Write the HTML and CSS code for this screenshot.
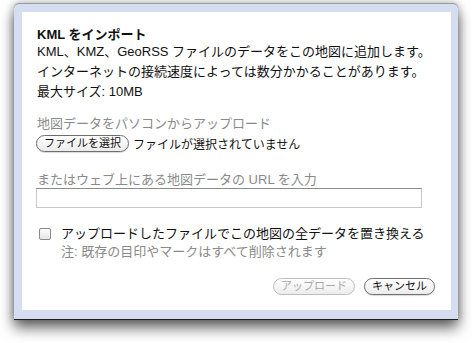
FILE: index.html
```html
<!DOCTYPE html>
<html lang="ja">
<head>
    <meta charset="UTF-8">
    <meta name="viewport" content="width=device-width, initial-scale=1.0">
    <title>KML をインポート</title>
    <link rel="stylesheet" href="styles.css">
</head>
<body>
    <div class="dialog">
        <div class="dialog-inner">
            <div class="title">KML をインポート</div>
            <div class="desc">
                KML、KMZ、GeoRSS ファイルのデータをこの地図に追加します。<br>
                インターネットの接続速度によっては数分かかることがあります。<br>
                最大サイズ: 10MB
            </div>

            <div class="label upload-label">地図データをパソコンからアップロード</div>
            <div class="file-row">
                <button class="pill">ファイルを選択</button>
                <span class="file-name">ファイルが選択されていません</span>
            </div>

            <div class="label url-label">またはウェブ上にある地図データの URL を入力</div>
            <input class="url-input" type="text">

            <label class="replace-row">
                <input class="check" type="checkbox">
                <span>アップロードしたファイルでこの地図の全データを置き換える</span>
            </label>
            <div class="note">注: 既存の目印やマークはすべて削除されます</div>

            <div class="actions">
                <button class="pill disabled" disabled>アップロード</button>
                <button class="pill">キャンセル</button>
            </div>
        </div>
    </div>
</body>
</html>
```

FILE: styles.css
```css
:root {
    --frame-color: #d5ddf0;
    --text-color: #111;
    --muted-color: #8a8a8a;
}

* {
    margin: 0;
    padding: 0;
    box-sizing: border-box;
    font-family: "Liberation Sans", "Noto Sans CJK JP", sans-serif;
}

body {
    background-color: #fff;
    width: 472px;
    height: 343px;
    overflow: hidden;
    padding: 3px 0 0 14px;
}

.dialog {
    width: 444px;
    background-color: var(--frame-color);
    border-top: 1px solid #9a9a9a;
    border-radius: 5px 5px 0 0;
    padding: 8px 7px 9px 8px;
    box-shadow: 0 1px 0 #1e1e1e, 0 9px 14px rgba(0, 0, 0, 0.6), 0 0 9px rgba(0, 0, 0, 0.3);
}

.dialog-inner {
    background-color: #fff;
    padding: 16px 16px 15px 14px;
    color: var(--text-color);
    font-size: 13px;
}

.title {
    font-weight: bold;
    font-size: 13px;
    line-height: 14px;
    padding-left: 1px;
}

.desc {
    line-height: 20px;
    padding-left: 1px;
}

.label {
    color: var(--muted-color);
    line-height: 16px;
    padding-left: 1px;
}

.upload-label {
    margin-top: 14px;
}

.file-row {
    display: flex;
    align-items: center;
    height: 20px;
    margin-top: 1px;
}

.file-name {
    font-size: 12px;
    margin-left: 4px;
}

.pill {
    height: 17px;
    padding: 0 7px;
    font-size: 11px;
    line-height: 15px;
    color: #111;
    background: linear-gradient(#ffffff, #ececec);
    border: 1px solid #6f6f6f;
    border-radius: 9px;
    box-shadow: 0 1px 1px rgba(0, 0, 0, 0.15);
}

.pill.disabled {
    color: #a8a8a8;
    border-color: #bdbdbd;
    box-shadow: none;
}

.url-label {
    margin-top: 19px;
}

.url-input {
    display: block;
    width: 386px;
    height: 20px;
    border: 1px solid #c8c8c8;
    border-top-color: #8a8a8a;
    outline: none;
}

.replace-row {
    display: flex;
    align-items: center;
    margin-top: 17px;
    line-height: 18px;
}

.check {
    appearance: none;
    width: 12px;
    height: 12px;
    margin: 0 10px 0 3px;
    border: 1px solid #8a8a8a;
    border-radius: 2px;
    background: linear-gradient(#fdfdfd, #e6e6e6);
}

.note {
    color: var(--muted-color);
    line-height: 18px;
    padding-left: 25px;
}

.actions {
    display: flex;
    justify-content: flex-end;
    gap: 9px;
    margin-top: 17px;
}
```
